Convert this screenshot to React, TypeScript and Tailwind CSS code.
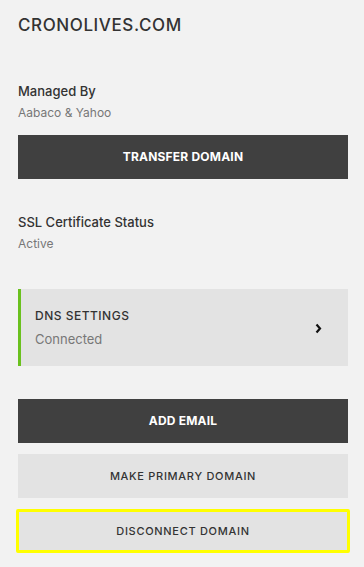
import React from "react";

const DomainDetails: React.FC = () => {
  return (
    <div className="min-h-screen w-full bg-[#f2f2f2] pl-[18px] pr-[16px] pt-[15px] font-['Inter','Liberation_Sans',Arial,sans-serif] text-[#333]">
      <h1 className="text-[17px] leading-[20px] font-medium tracking-[0.6px] text-[#333]">CRONOLIVES.COM</h1>

      <div className="mt-[48px]">
        <p className="text-[13px] leading-[16px] font-medium text-[#333]">Managed By</p>
        <p className="mt-[7px] text-[12px] leading-[14px] text-[#777]">Aabaco &amp; Yahoo</p>
      </div>
      <button
        type="button"
        className="mt-[15px] flex h-[44px] w-full items-center justify-center bg-[#404040] text-[12px] font-bold tracking-[0.2px] text-white"
      >
        TRANSFER DOMAIN
      </button>

      <div className="mt-[35px]">
        <p className="text-[13px] leading-[16px] font-medium text-[#333]">SSL Certificate Status</p>
        <p className="mt-[7px] text-[12px] leading-[14px] text-[#777]">Active</p>
      </div>

      <div className="mt-[38px] flex h-[77px] items-center justify-between border-l-[3px] border-[#6ac11e] bg-[#e3e3e3] pl-[14px] pr-[26px]">
        <div>
          <p className="text-[12px] leading-[15px] font-medium tracking-[0.5px] text-[#333]">DNS SETTINGS</p>
          <p className="mt-[8px] text-[13px] leading-[16px] text-[#777]">Connected</p>
        </div>
        <svg width="7" height="11" viewBox="0 0 7 11" className="mt-[1px]">
          <path d="M1.5 1.5 L5 5.5 L1.5 9.5" fill="none" stroke="#111" strokeWidth="2.2" />
        </svg>
      </div>

      <button
        type="button"
        className="mt-[33px] flex h-[44px] w-full items-center justify-center bg-[#404040] text-[12px] font-bold tracking-[0.2px] text-white"
      >
        ADD EMAIL
      </button>
      <button
        type="button"
        className="mt-[11px] flex h-[44px] w-full items-center justify-center bg-[#e3e3e3] text-[11px] font-medium tracking-[0.7px] text-[#333]"
      >
        MAKE PRIMARY DOMAIN
      </button>
      <button
        type="button"
        className="-mx-[2px] mt-[11px] flex h-[44px] w-[calc(100%+4px)] items-center justify-center rounded-[2px] border-[3px] border-[#ffff00] bg-[#e3e3e3] text-[11px] font-medium tracking-[0.7px] text-[#333]"
      >
        DISCONNECT DOMAIN
      </button>
    </div>
  );
};

export default function App() {
  return <DomainDetails />;
}
